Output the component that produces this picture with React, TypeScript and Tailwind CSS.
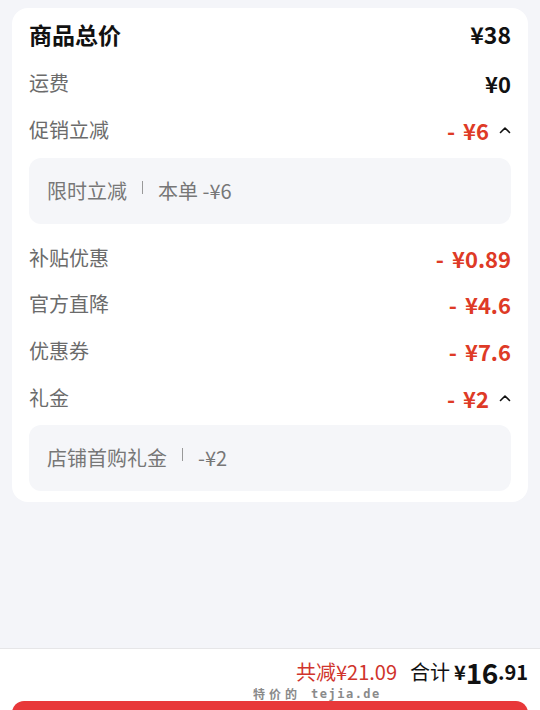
import React from "react";

const font = { fontFamily: '"Noto Sans CJK SC", "Noto Sans", sans-serif' };

function Chevron() {
  return (
    <svg width="12" height="8" viewBox="0 0 12 8" className="ml-[10px]">
      <path d="M1.5 6.5 L6 2 L10.5 6.5" fill="none" stroke="#111" strokeWidth="1.6" strokeLinecap="round" strokeLinejoin="round" />
    </svg>
  );
}

function Row({ label, value, red, chevron, h }: { label: string; value: string; red?: boolean; chevron?: boolean; h: string }) {
  return (
    <div className={`flex items-center justify-between ${h}`}>
      <span className="text-[20px] text-[#6b6b6b] leading-none">{label}</span>
      <span className="flex items-center">
        {red ? (
          <span className="text-[22px] font-bold text-[#de3a26] leading-none">
            <span className="mr-[8px]">-</span>
            {value}
          </span>
        ) : (
          <span className="text-[22px] font-bold text-[#111] leading-none">{value}</span>
        )}
        {chevron && <Chevron />}
      </span>
    </div>
  );
}

function SubBox({ label, value }: { label: string; value: string }) {
  return (
    <div className="h-[66px] rounded-[12px] bg-[#f5f6f9] flex items-center pl-[18px]">
      <span className="text-[20px] text-[#777] leading-none">{label}</span>
      <span className="mx-[15px] w-[1px] h-[13px] bg-[#999] -translate-y-[4px]"></span>
      <span className="text-[20px] text-[#777] leading-none">{value}</span>
    </div>
  );
}

export default function App() {
  return (
    <div className="h-[710px] w-[540px] flex flex-col bg-[#f4f5f9] overflow-hidden relative" style={font}>
      <div className="px-[12px] pt-[8px]">
        <div className="bg-white rounded-[16px] px-[17px] pt-[5px] pb-[11px]">
          <div className="flex items-center justify-between h-[46px] pb-[4px]">
            <span className="text-[23px] font-bold text-[#111] leading-none">商品总价</span>
            <span className="text-[23px] font-bold text-[#111] leading-none">¥38</span>
          </div>
          <Row label="运费" value="¥0" h="h-[48px]" />
          <Row label="促销立减" value="¥6" red chevron h="h-[46px]" />
          <div className="mt-[5px]">
            <SubBox label="限时立减" value="本单 -¥6" />
          </div>
          <Row label="补贴优惠" value="¥0.89" red h="mt-[11px] h-[46px]" />
          <Row label="官方直降" value="¥4.6" red h="h-[46px]" />
          <Row label="优惠券" value="¥7.6" red h="h-[47px]" />
          <Row label="礼金" value="¥2" red chevron h="h-[47px]" />
          <div className="mt-[4px]">
            <SubBox label="店铺首购礼金" value="-¥2" />
          </div>
        </div>
      </div>
      <div className="flex-1" />
      <div className="bg-white border-t border-[#e6e6e8] pt-[9px] px-[12px] h-[62px] shrink-0">
        <div className="flex items-center justify-end h-[28px]">
          <span className="text-[20px] text-[#d0342c] leading-none">共减¥21.09</span>
          <span className="ml-[13px] text-[20px] text-[#111] leading-none">合计</span>
          <span className="ml-[4px] text-[20px] font-bold text-[#111] leading-none">¥</span>
          <span className="text-[28px] font-bold text-[#111] leading-none tracking-[-0.5px]">16</span>
          <span className="text-[20px] font-bold text-[#111] leading-none">.91</span>
        </div>
        <div className="h-[14px] flex items-end pl-[241px]">
          <span className="text-[12px] font-bold text-[#8a8a8a] leading-none tracking-[4px]">特价的</span>
          <span className="ml-[10px] text-[12px] font-bold text-[#8a8a8a] leading-none tracking-[1.5px]" style={{ fontFamily: '"DejaVu Sans Mono", monospace' }}>tejia.de</span>
        </div>
        <div className="mt-[1px] h-[48px] rounded-[12px] bg-[#e8383a]" />
      </div>
    </div>
  );
}
